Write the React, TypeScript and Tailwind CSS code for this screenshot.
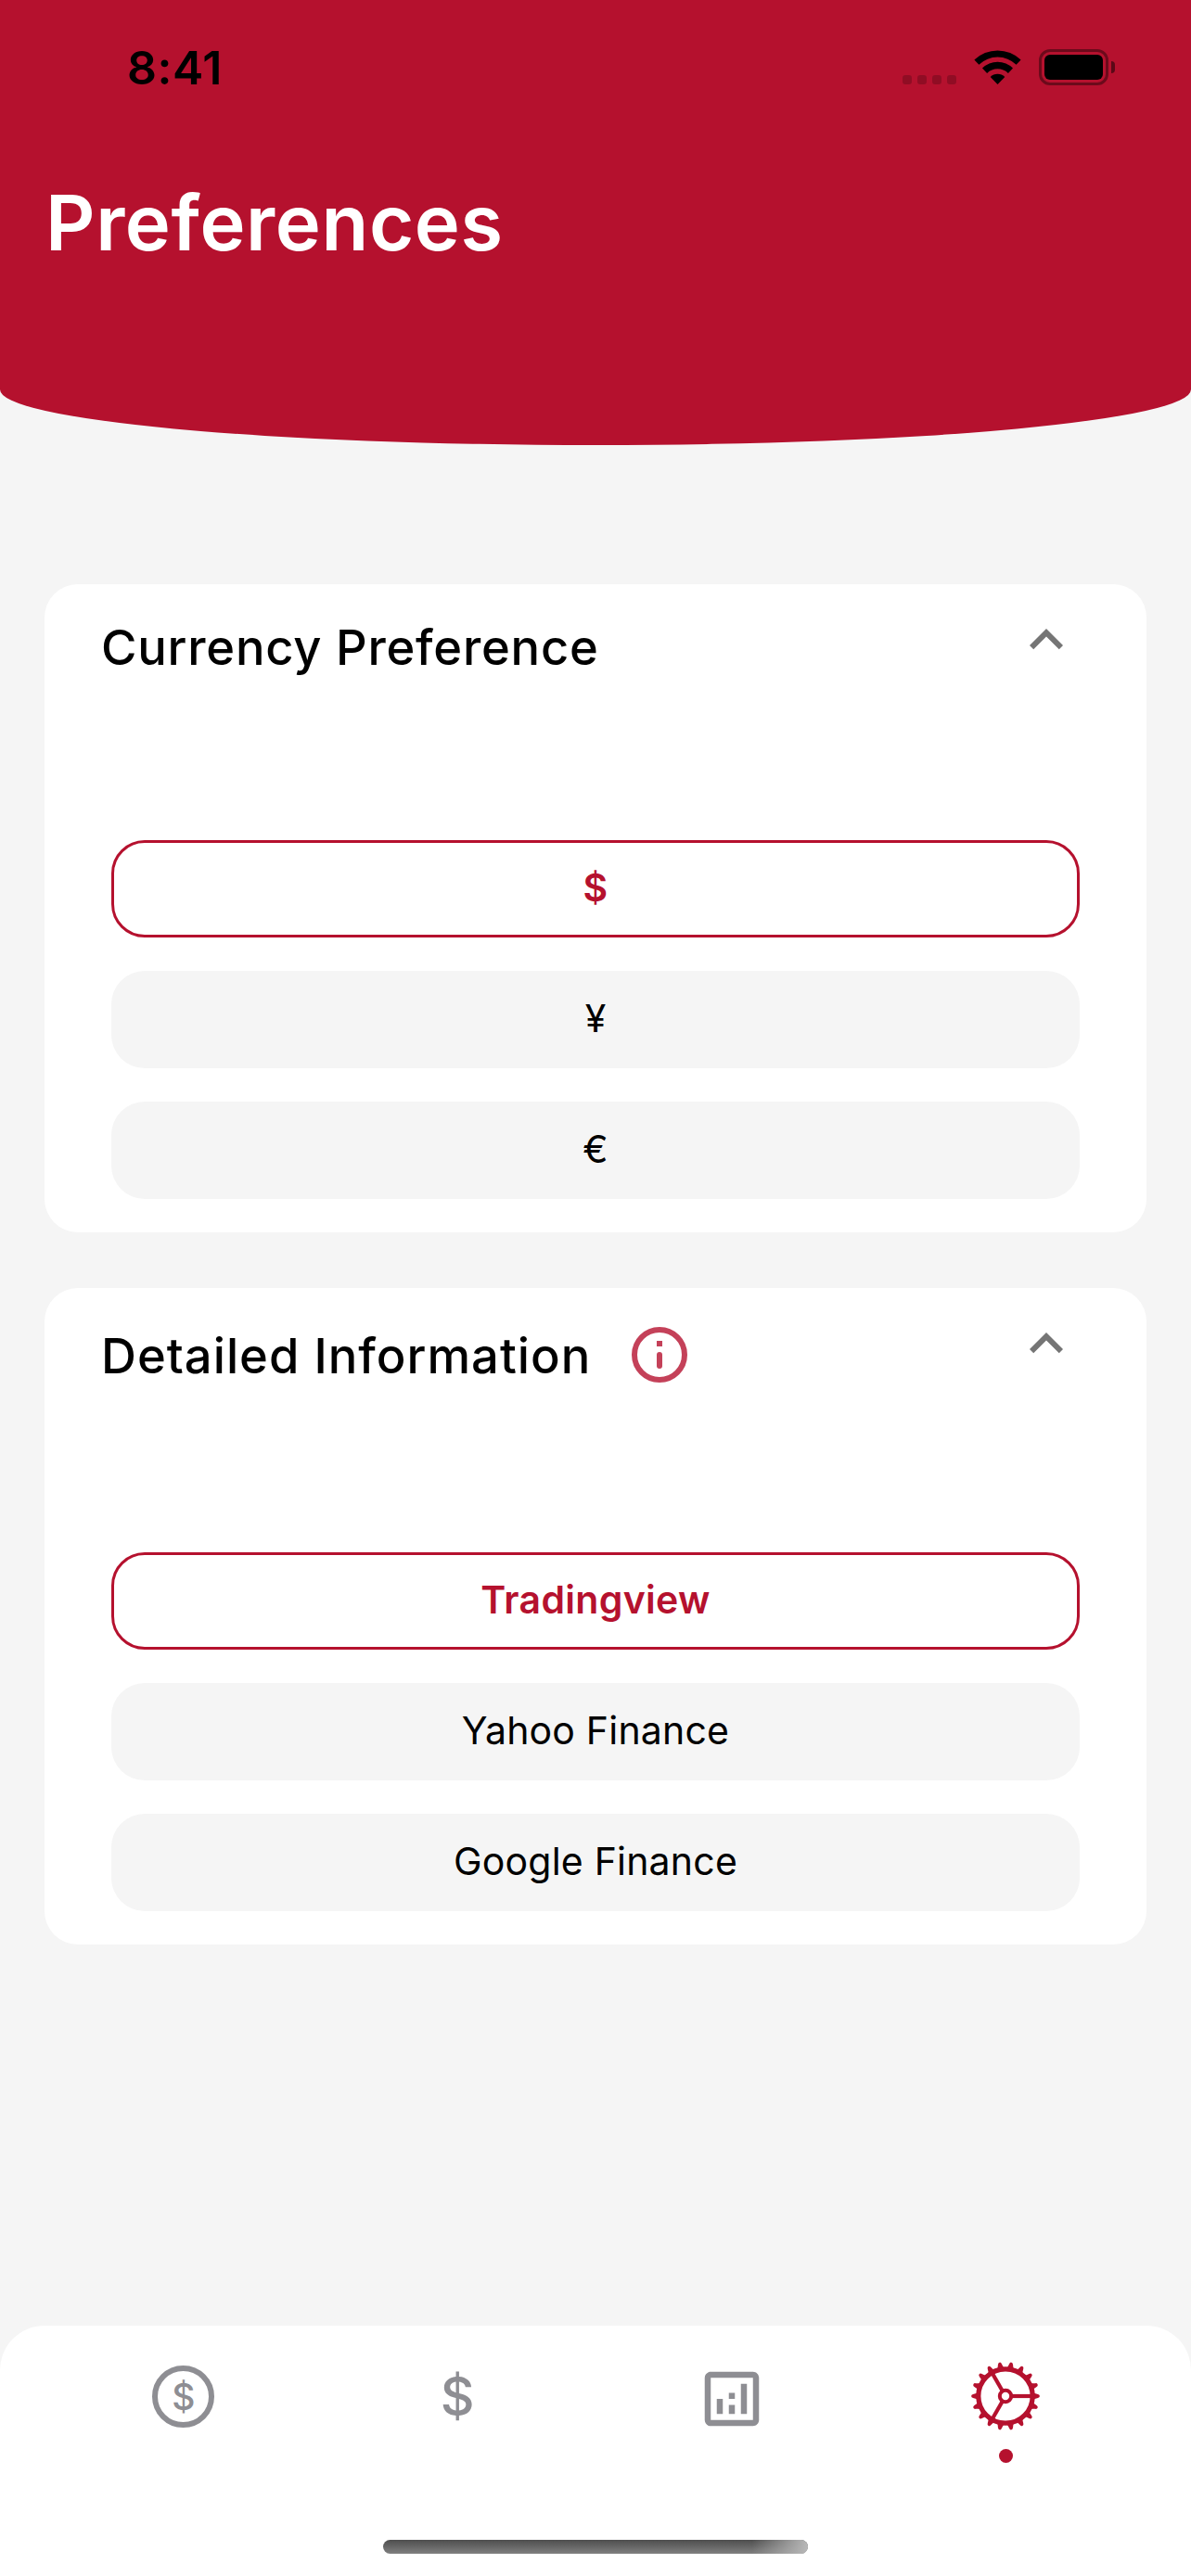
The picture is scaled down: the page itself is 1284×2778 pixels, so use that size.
import React from "react";
import { MdKeyboardArrowUp, MdOutlineAnalytics } from "react-icons/md";

function StatusBar() {
  return (
    <div className="flex h-[144px] items-start justify-between pl-[137px] pr-[82px]">
      <div className="mt-[43px] text-[50px] leading-[60px] font-semibold tracking-[0.5px] text-black">8:41</div>
      <div className="mt-[53px] flex h-[39px] items-start">
        <div className="mt-[28px] flex gap-[6px]">
          {[0, 1, 2, 3].map((i) => (
            <span key={i} className="size-[10px] rounded-[3px] bg-black/20" />
          ))}
        </div>
        <svg className="mt-[1px] ml-[19px] h-[37px] w-[51px]" viewBox="0 0 51 37">
          <path d="M0.4 10.6 A36 36 0 0 1 50.6 10.6 L45.6 15.7 A29 29 0 0 0 5.4 15.7Z" />
          <path d="M9 19.6 A23.4 23.4 0 0 1 42 19.6 L36.9 24.9 A16.4 16.4 0 0 0 14.1 24.9Z" />
          <path d="M17.7 28.9 A11 11 0 0 1 33.3 28.9 L25.5 37Z" />
        </svg>
        <div className="ml-[19px] flex items-center">
          <div className="h-[39px] w-[75px] rounded-[12px] border-[3px] border-black/40 p-[3px]">
            <div className="h-full w-full rounded-[6px] bg-black" />
          </div>
          <div className="ml-[3px] h-[13px] w-[4px] rounded-r-full bg-black/50" />
        </div>
      </div>
    </div>
  );
}

function Option({ label, selected }: { label: string; selected?: boolean }) {
  return (
    <button
      className={
        selected
          ? "flex h-[105px] w-full items-center justify-center rounded-[36px] border-[3px] border-[#b5112e] text-[41px] font-semibold tracking-[0.3px] text-[#b5112e]"
          : "flex h-[105px] w-full items-center justify-center rounded-[36px] bg-[#f5f5f5] text-[41px] font-normal tracking-[0.2px] text-black"
      }
    >
      <span className="relative -top-[1px]">{label}</span>
    </button>
  );
}

function InfoIcon() {
  return (
    <svg className="size-[72px]" viewBox="0 0 24 24" fill="#c44159">
      <circle cx="12" cy="12" r="9" fill="none" stroke="#c44159" strokeWidth="2" />
      <rect x="11" y="7" width="2" height="2" />
      <rect x="11" y="11" width="2" height="6" rx="1" />
    </svg>
  );
}

function GearIcon() {
  const teeth = Array.from({ length: 18 }, (_, i) => i * 20);
  return (
    <svg className="size-[76px]" viewBox="-38 -38 76 76" fill="#b5112e">
      <circle r="29.2" fill="none" stroke="#b5112e" strokeWidth="5.2" />
      <circle r="6.2" fill="none" stroke="#b5112e" strokeWidth="4" />
      {[0, 120, 240].map((a) => (
        <rect key={a} x="7" y="-2.1" width="21" height="4.2" transform={`rotate(${a})`} />
      ))}
      {teeth.map((a) => (
        <path key={a} d="M30 -4.6 L31.6 -3 L35 -2 Q36.9 -1.6 36.9 0 Q36.9 1.6 35 2 L31.6 3 L30 4.6Z" transform={`rotate(${a})`} />
      ))}
    </svg>
  );
}

export default function App() {
  return (
    <div className="flex h-[2778px] w-[1284px] flex-col bg-[#f5f5f5] font-['Inter',sans-serif] text-black">
      <header className="h-[480px] rounded-b-[50%_60px] bg-[#b5112e]">
        <StatusBar />
        <h1 className="mt-[46px] pl-[49px] text-[83px] leading-[100px] font-semibold tracking-[0.6px] text-white">Preferences</h1>
      </header>

      <main className="flex flex-1 flex-col gap-[60px] px-[48px] pt-[150px]">
        <section className="h-[699px] rounded-[36px] bg-white px-[72px] pt-[24px]">
          <div className="flex h-[252px] items-start justify-between">
            <h2 className="-ml-[11px] pt-[12px] text-[52.5px] leading-[64px] font-medium tracking-[0.75px]">Currency Preference</h2>
            <MdKeyboardArrowUp className="size-[72px] text-[#757575]" />
          </div>
          <div className="flex flex-col gap-[36px]">
            <Option label="$" selected />
            <Option label="¥" />
            <Option label="€" />
          </div>
        </section>

        <section className="h-[708px] rounded-[36px] bg-white px-[72px] pt-[24px]">
          <div className="flex h-[261px] items-start justify-between">
            <div className="-ml-[11px] flex items-start pt-[12px]">
              <h2 className="pt-[5px] text-[52.5px] leading-[64px] font-medium tracking-[1px]">Detailed Information</h2>
              <div className="ml-[38px]">
                <InfoIcon />
              </div>
            </div>
            <MdKeyboardArrowUp className="size-[72px] text-[#757575]" />
          </div>
          <div className="flex flex-col gap-[36px]">
            <Option label="Tradingview" selected />
            <Option label="Yahoo Finance" />
            <Option label="Google Finance" />
          </div>
        </section>
      </main>

      <nav className="flex h-[270px] flex-col items-center justify-between rounded-t-[48px] bg-white pb-[24px]">
        <div className="grid w-full grid-cols-4 pt-[38px] pr-[52px] pl-[50px] text-[#8e8e93]">
          <div className="flex h-[76px] items-center justify-center">
            <div className="flex size-[67px] items-center justify-center rounded-full border-[6px] border-[#8e8e93] text-[39px] leading-none font-medium">$</div>
          </div>
          <div className="flex h-[76px] items-center justify-center text-[57px] leading-none font-medium">$</div>
          <div className="flex h-[82px] items-center justify-center">
            <MdOutlineAnalytics className="size-[78px]" />
          </div>
          <div className="flex flex-col items-center">
            <GearIcon />
            <span className="mt-[19px] size-[15px] rounded-full bg-[#b5112e]" />
          </div>
        </div>
        <div className="relative h-[15px] w-[458px] overflow-hidden rounded-full bg-linear-to-b from-[#4e4e4e] to-[#808080]">
          <div className="absolute inset-y-0 right-0 w-[60px] bg-linear-to-r from-[#b8b8b8]/0 to-[#b8b8b8]" />
        </div>
      </nav>
    </div>
  );
}
